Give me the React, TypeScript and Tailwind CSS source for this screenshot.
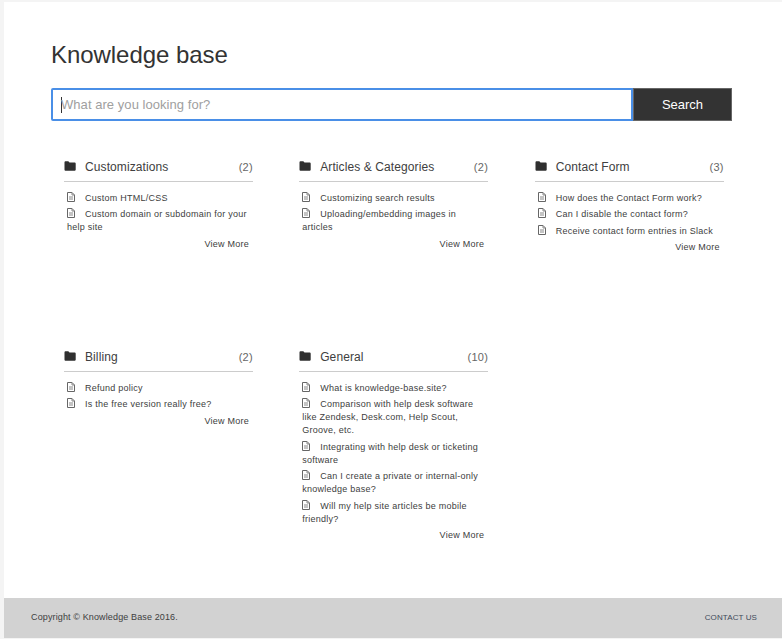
const FolderIcon = () => (
  <svg width="12" height="10" viewBox="0 0 12 10" className="shrink-0" aria-hidden="true">
    <path d="M0.5 1.2C0.5 0.7 0.9 0.3 1.4 0.3H4.3L5.5 1.6H10.8C11.3 1.6 11.7 2 11.7 2.5V8.8C11.7 9.3 11.3 9.7 10.8 9.7H1.4C0.9 9.7 0.5 9.3 0.5 8.8Z" fill="#2f2f2f" />
  </svg>
);

const FileIcon = () => (
  <svg width="8" height="10" viewBox="0 0 8 10" className="inline-block align-[-1px]" aria-hidden="true">
    <path d="M0.5 0.5H5L7.5 3V9.5H0.5Z" fill="none" stroke="#666" strokeWidth="1" />
    <path d="M5 0.5V3H7.5" fill="none" stroke="#888" strokeWidth="1" />
    <path d="M2 5H6M2 7H6" stroke="#888" strokeWidth="1" />
  </svg>
);

type Category = { title: string; count: number; items: string[] };

const rows: Category[][] = [
  [
    { title: "Customizations", count: 2, items: ["Custom HTML/CSS", "Custom domain or subdomain for your help site"] },
    { title: "Articles & Categories", count: 2, items: ["Customizing search results", "Uploading/embedding images in articles"] },
    { title: "Contact Form", count: 3, items: ["How does the Contact Form work?", "Can I disable the contact form?", "Receive contact form entries in Slack"] },
  ],
  [
    { title: "Billing", count: 2, items: ["Refund policy", "Is the free version really free?"] },
    {
      title: "General",
      count: 10,
      items: [
        "What is knowledge-base.site?",
        "Comparison with help desk software like Zendesk, Desk.com, Help Scout, Groove, etc.",
        "Integrating with help desk or ticketing software",
        "Can I create a private or internal-only knowledge base?",
        "Will my help site articles be mobile friendly?",
      ],
    },
  ],
];

function CategoryCard({ category }: { category: Category }) {
  return (
    <section className="w-[189px]">
      <div className="flex h-[29px] items-start border-b border-[#cccccc] pt-[6px]">
        <span className="mt-[2px]"><FolderIcon /></span>
        <h2 className="ml-[9px] flex-1 text-[12px] leading-[16px] tracking-[0.1px] text-[#404040]">{category.title}</h2>
        <span className="text-[11px] leading-[16px] tracking-[0.3px] text-[#666666]">({category.count})</span>
      </div>
      <ul className="mt-[10px] pl-[3px] pr-[4px]">
        {category.items.map((item) => (
          <li key={item} className="mb-[3.4px] text-[9px] leading-[13px] tracking-[0.25px] text-[#404040]">
            <span className="mr-[10px]"><FileIcon /></span>
            {item}
          </li>
        ))}
      </ul>
      <div className="pr-[4px] text-right text-[9px] leading-[13px] tracking-[0.25px] text-[#404040]">View More</div>
    </section>
  );
}

export default function App() {
  return (
    <div className="h-[639px] w-[782px] overflow-hidden bg-[#f4f4f4] pl-[4px] pt-[2px] font-['Liberation_Sans',Arial,sans-serif]">
      <div className="flex h-[636px] flex-col bg-white">
        <main className="flex-1 pl-[47px] pr-[50px]">
          <h1 className="mt-[37px] text-[24px] font-normal leading-[32px] tracking-[-0.05px] text-[#333333]">Knowledge base</h1>
          <div className="mt-[17px] flex h-[33px] w-[681px]">
            <div className="flex flex-1 items-center rounded-l-[2px] border-2 border-[#4a8fe7] pl-[8px] text-[13px] tracking-[0.05px] text-[#a0a0a0]">
              <span className="mr-[-1px] h-[16px] w-px bg-[#333333]" />
              What are you looking for?
            </div>
            <button className="w-[99px] border border-[#666666] bg-[#333333] text-[13px] font-normal text-white">Search</button>
          </div>
          <div className="ml-[13px] mt-[32px] grid grid-cols-[235.2px_235.6px_189px] grid-rows-[190px_auto]">
            {rows.flat().map((category) => (
              <CategoryCard key={category.title} category={category} />
            ))}
          </div>
        </main>
        <footer className="flex h-[40px] items-center justify-between bg-[#d2d2d2] pl-[27px] pr-[25px]">
          <span className="text-[9px] tracking-[0.13px] text-[#404040]">Copyright © Knowledge Base 2016.</span>
          <span className="text-[8px] tracking-[0.1px] text-[#404a5a]">CONTACT US</span>
        </footer>
      </div>
    </div>
  );
}
